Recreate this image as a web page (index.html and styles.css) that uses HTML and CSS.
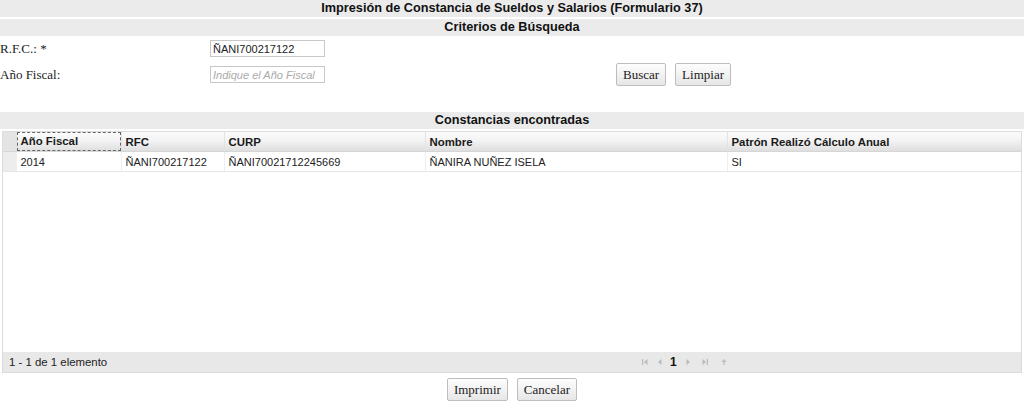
FILE: index.html
```html
<!DOCTYPE html>
<html lang="es">
<head>
<meta charset="utf-8">
<title>Impresión de Constancia</title>
<link rel="stylesheet" href="styles.css">
</head>
<body>
<div class="bar title">Impresión de Constancia de Sueldos y Salarios (Formulario 37)</div>
<div class="bar sub">Criterios de Búsqueda</div>
<div class="form">
  <div class="frow">
    <label class="flabel">R.F.C.: *</label>
    <input class="finput" type="text" value="ÑANI700217122">
  </div>
  <div class="frow frow2">
    <label class="flabel">Año Fiscal:</label>
    <input class="finput" type="text" placeholder="Indique el Año Fiscal">
    <div class="fbtns">
      <button class="btn">Buscar</button>
      <button class="btn">Limpiar</button>
    </div>
  </div>
</div>
<div class="bar sub2">Constancias encontradas</div>
<div class="grid">
  <table class="gtable">
    <colgroup>
      <col class="c0"><col class="c1"><col class="c2"><col class="c3"><col class="c4"><col>
    </colgroup>
    <thead>
      <tr>
        <th class="sel"></th>
        <th><span class="focus">Año Fiscal</span></th>
        <th>RFC</th>
        <th>CURP</th>
        <th>Nombre</th>
        <th>Patrón Realizó Cálculo Anual</th>
      </tr>
    </thead>
    <tbody>
      <tr>
        <td class="sel"></td>
        <td>2014</td>
        <td>ÑANI700217122</td>
        <td>ÑANI70021712245669</td>
        <td>ÑANIRA NUÑEZ ISELA</td>
        <td>SI</td>
      </tr>
    </tbody>
  </table>
  <div class="gbody"></div>
  <div class="pager">
    <span class="pinfo">1 - 1 de 1 elemento</span>
    <div class="pnav">
      <svg class="pico" width="8" height="8" viewBox="0 0 8 8"><rect x="1" y="1" width="1.2" height="6" fill="#bbb"/><path d="M6.5 1 L3 4 L6.5 7 Z" fill="#bbb"/></svg>
      <svg class="pico" width="8" height="8" viewBox="0 0 8 8"><path d="M5.5 1 L2 4 L5.5 7 Z" fill="#bbb"/></svg>
      <span class="pnum">1</span>
      <svg class="pico" width="8" height="8" viewBox="0 0 8 8"><path d="M2.5 1 L6 4 L2.5 7 Z" fill="#bbb"/></svg>
      <svg class="pico" width="8" height="8" viewBox="0 0 8 8"><path d="M1.5 1 L5 4 L1.5 7 Z" fill="#bbb"/><rect x="5.8" y="1" width="1.2" height="6" fill="#bbb"/></svg>
      <svg class="pico" width="8" height="8" viewBox="0 0 8 8"><path d="M4 1 L6.5 4 L1.5 4 Z" fill="#bbb"/><rect x="3.4" y="4" width="1.2" height="3" fill="#bbb"/></svg>
    </div>
  </div>
</div>
<div class="actions">
  <button class="btn">Imprimir</button>
  <button class="btn">Cancelar</button>
</div>
</body>
</html>
```
FILE: styles.css
```css
html, body {
  margin: 0;
  padding: 0;
  background: #fff;
}
body {
  width: 1024px;
  font-family: "Liberation Sans", Arial, sans-serif;
  color: #222;
}
.bar {
  background: #ebebeb;
  height: 17px;
  line-height: 17px;
  text-align: center;
  font-weight: bold;
  font-size: 12.7px;
  color: #111;
}
.sub {
  margin-top: 2px;
}
.sub2 {
  margin-top: 26px;
}
.form {
  padding-top: 4px;
  display: flex;
  flex-direction: column;
  gap: 6px;
}
.frow {
  display: flex;
  align-items: center;
  height: 17px;
}
.frow2 {
  height: 23px;
}
.flabel {
  width: 210px;
  font-family: "Liberation Serif", "Times New Roman", serif;
  font-size: 13px;
  color: #222;
}
.finput {
  box-sizing: border-box;
  width: 115px;
  height: 17px;
  margin: 0;
  padding: 0 2px;
  border: 1px solid #c8c8c8;
  font-family: "Liberation Sans", Arial, sans-serif;
  font-size: 11px;
  color: #222;
  outline: none;
}
.finput::placeholder {
  color: #aaa;
  font-style: italic;
}
.fbtns {
  margin-left: 291px;
  display: flex;
  gap: 9px;
}
.btn {
  box-sizing: border-box;
  height: 23px;
  margin: 0;
  padding: 0 6px;
  border: 1px solid #bdbdbd;
  border-radius: 2px;
  background: linear-gradient(#fdfdfd, #f0f0f0 60%, #e6e6e6);
  font-family: "Liberation Serif", "Times New Roman", serif;
  font-size: 13px;
  color: #222;
}
.grid {
  margin: 2px 2px 0 2px;
  height: 240px;
  border: 1px solid #dcdcdc;
  display: flex;
  flex-direction: column;
}
.gtable {
  width: 100%;
  border-collapse: collapse;
  table-layout: fixed;
  font-size: 11px;
}
.c0 { width: 13px; }
.c1 { width: 105px; }
.c2 { width: 103px; }
.c3 { width: 201px; }
.c4 { width: 302px; }
.gtable th {
  height: 19px;
  padding: 0 4px;
  text-align: left;
  font-weight: bold;
  font-size: 11.4px;
  color: #1a1a1a;
  background: linear-gradient(#fbfbfb, #f3f3f3 45%, #e4e4e4 85%, #dedede);
  border-left: 1px solid #e2e2e2;
  border-bottom: 1px solid #d6d6d6;
  white-space: nowrap;
}
.gtable th:first-child,
.gtable td:first-child {
  border-left: none;
}
.gtable th.sel {
  background: #e4e4e4;
  padding: 0;
}
.gtable th .focus {
  display: block;
  margin: 0 -4px;
  padding: 0 3px;
  height: 17px;
  line-height: 17px;
  border: 1px dashed #666;
}
.gtable td {
  height: 19px;
  padding: 0 4px;
  color: #222;
  border-left: 1px solid #eeeeee;
  border-bottom: 1px solid #e6e6e6;
  white-space: nowrap;
}
.gtable td.sel {
  background: #ededed;
  padding: 0;
}
.gbody {
  flex: 1;
}
.pager {
  height: 20px;
  background: #e8e8e8;
  display: flex;
  align-items: center;
  position: relative;
  font-size: 11.4px;
  color: #222;
}
.pinfo {
  padding-left: 6px;
}
.pnav {
  position: absolute;
  left: 638px;
  top: 0;
  height: 20px;
  display: flex;
  align-items: center;
}
.pico {
  display: block;
}
.pnav .pico:nth-child(1) { margin-right: 7px; }
.pnav .pico:nth-child(2) { margin-right: 6px; }
.pnum {
  font-weight: bold;
  font-size: 12px;
  color: #111;
  margin-right: 7px;
}
.pnav .pico:nth-child(4) { margin-right: 9px; }
.pnav .pico:nth-child(5) { margin-right: 11px; }
.actions {
  display: flex;
  justify-content: center;
  gap: 9px;
  padding-top: 5px;
}
```
